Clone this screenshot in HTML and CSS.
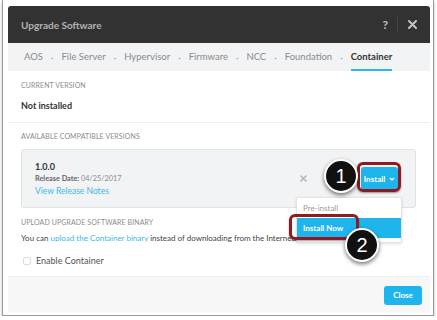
FILE: index.html
```html
<!DOCTYPE html>
<html lang="en">
  <head>
    <meta charset="UTF-8" />
    <title>Upgrade Software</title>
    <link rel="stylesheet" href="styles.css">
  </head>
  <body>
    <div class="frame">
      <div class="dialog">
        <div class="dialog-header">
          <span class="dialog-title">Upgrade Software</span>
          <div class="header-actions">
            <span class="help">?</span>
            <span class="header-divider"></span>
            <svg class="close-x" width="9" height="9" viewBox="0 0 9 9">
              <path d="M1 1 L8 8 M8 1 L1 8" stroke="#c4c4c4" stroke-width="2" stroke-linecap="round" />
            </svg>
          </div>
        </div>

        <div class="tabs">
          <span class="tab">AOS</span>
          <span class="dot">·</span>
          <span class="tab">File Server</span>
          <span class="dot">·</span>
          <span class="tab">Hypervisor</span>
          <span class="dot">·</span>
          <span class="tab">Firmware</span>
          <span class="dot">·</span>
          <span class="tab">NCC</span>
          <span class="dot">·</span>
          <span class="tab">Foundation</span>
          <span class="dot">·</span>
          <span class="tab active">Container</span>
        </div>

        <div class="section current">
          <div class="section-label">Current Version</div>
          <div class="current-value">Not installed</div>
        </div>

        <div class="section available">
          <div class="section-label">Available Compatible Versions</div>
          <div class="version-card">
            <div class="version-info">
              <div class="version-number">1.0.0</div>
              <div class="release-date"><strong>Release Date:</strong> 04/25/2017</div>
              <a class="release-notes">View Release Notes</a>
            </div>
            <div class="version-actions">
              <svg class="remove-x" width="7" height="7" viewBox="0 0 7 7">
                <path d="M1 1 L6 6 M6 1 L1 6" stroke="#b5b5b5" stroke-width="1.6" stroke-linecap="round" />
              </svg>
              <div class="install-wrap">
                <button class="install-btn">Install
                  <svg width="6" height="4" viewBox="0 0 6 4">
                    <path d="M1 1 L3 3 L5 1" stroke="#fff" stroke-width="1.2" fill="none" />
                  </svg>
                </button>
                <div class="install-menu">
                  <div class="menu-item">Pre-install</div>
                  <div class="menu-item selected">Install Now</div>
                </div>
              </div>
            </div>
          </div>

          <div class="section-label upload-label">Upload Upgrade Software Binary</div>
          <p class="upload-text">You can <a>upload the Container binary</a> instead of downloading from the Internet.</p>

          <label class="checkbox-row">
            <span class="checkbox"></span>
            Enable Container
          </label>
        </div>

        <div class="dialog-footer">
          <button class="close-btn">Close</button>
        </div>

        <!-- annotations -->
        <span class="highlight hl-install"></span>
        <span class="highlight hl-now"></span>
        <span class="callout callout-1">1</span>
        <span class="callout callout-2">2</span>
      </div>
    </div>
  </body>
</html>
```

FILE: styles.css
```css
* {
  margin: 0;
  padding: 0;
  box-sizing: border-box;
}
body {
  background: #ffffff;
  font-family: Lato, "Open Sans", sans-serif;
  color: #333;
}
.frame {
  width: 432px;
  margin-left: 2px;
  padding: 6px 3px 2px 5px;
  border: 1px solid #9a9a9a;
  border-top: none;
  box-shadow: 0 2px 3px rgba(0, 0, 0, 0.25);
}
.dialog {
  position: relative;
  width: 422px;
  height: 307px;
  display: flex;
  flex-direction: column;
  background: #fff;
  border-radius: 3px 3px 0 0;
}
.dialog-header {
  height: 37px;
  background: #323232;
  border-radius: 3px 3px 0 0;
  display: flex;
  align-items: center;
  justify-content: space-between;
  padding: 0 13px 0 13px;
}
.dialog-title {
  font-size: 10px;
  font-weight: bold;
  color: #b3b3b3;
}
.header-actions {
  display: flex;
  align-items: center;
}
.help {
  font-size: 12px;
  font-weight: 900;
  color: #b8b8b8;
}
.header-divider {
  width: 1px;
  height: 16px;
  background: #454545;
  margin: 0 10px 0 9px;
}
.tabs {
  height: 28px;
  background: #f2f3f5;
  display: flex;
  align-items: stretch;
  padding-left: 16px;
  font-size: 9.5px;
  color: #8a8a8a;
}
.tab {
  display: flex;
  align-items: center;
  padding-top: 1px;
  border-bottom: 2px solid transparent;
}
.tab.active {
  color: #333;
  font-weight: bold;
  border-bottom-color: #2db8ea;
}
.dot {
  display: flex;
  align-items: center;
  padding: 1px 8px 0;
  color: #999;
}
.section {
  padding: 0 13px;
}
.section.current {
  padding-top: 8px;
  padding-bottom: 9px;
  border-bottom: 1px solid #eeeeee;
}
.section-label {
  font-size: 7px;
  line-height: 12px;
  text-transform: uppercase;
  color: #8c8c8c;
  letter-spacing: 0.1px;
}
.current-value {
  margin-top: 8px;
  font-size: 9px;
  line-height: 14px;
  font-weight: bold;
  color: #333;
}
.section.available {
  padding-top: 7px;
}
.version-card {
  margin-top: 7px;
  margin-right: 1px;
  height: 59px;
  background: #f2f3f5;
  border: 1px solid #e1e2e4;
  border-radius: 3px;
  display: flex;
  align-items: center;
  justify-content: space-between;
  padding: 0 17px 0 13px;
}
.version-number {
  font-size: 9px;
  line-height: 12px;
  font-weight: bold;
  color: #333;
}
.release-date {
  font-size: 7.3px;
  line-height: 12px;
  color: #8c8c8c;
}
.release-date strong {
  color: #666;
}
.release-notes {
  display: block;
  font-size: 8.5px;
  line-height: 12px;
  color: #3bb8e9;
}
.version-actions {
  display: flex;
  align-items: center;
  gap: 54px;
}
.install-wrap {
  position: relative;
}
.install-btn {
  width: 37px;
  height: 23px;
  border: none;
  border-radius: 3px;
  background: #1db5ec;
  color: #fff;
  font-family: inherit;
  font-size: 8px;
  font-weight: bold;
  display: flex;
  align-items: center;
  justify-content: center;
  gap: 4px;
}
.install-menu {
  position: absolute;
  top: 30px;
  right: -4px;
  width: 106px;
  padding-bottom: 4px;
  background: #fff;
  border: 1px solid #e3e3e3;
  border-radius: 2px;
  box-shadow: 0 1px 3px rgba(0, 0, 0, 0.12);
}
.menu-item {
  height: 20px;
  line-height: 20px;
  padding-left: 6px;
  font-size: 8px;
  color: #9a9a9a;
}
.menu-item.selected {
  background: #1db5ec;
  color: #fff;
  font-weight: bold;
}
.upload-label {
  margin-top: 8px;
}
.upload-text {
  margin-top: 4px;
  font-size: 8px;
  line-height: 12px;
  color: #444;
  white-space: nowrap;
}
.upload-text a {
  color: #3bb8e9;
}
.checkbox-row {
  margin-top: 10px;
  margin-left: 2px;
  display: flex;
  align-items: center;
  gap: 5px;
  font-size: 9px;
  line-height: 14px;
  color: #555;
}
.checkbox {
  width: 8px;
  height: 8px;
  border: 1px solid #dcdcdc;
  border-radius: 2px;
  background: #fff;
}
.dialog-footer {
  margin-top: auto;
  height: 37px;
  background: #f7f7f7;
  border-top: 1px solid #efefef;
  display: flex;
  align-items: center;
  justify-content: flex-end;
  padding-right: 8px;
}
.close-btn {
  width: 38px;
  height: 19px;
  border: none;
  border-radius: 3px;
  background: #1db5ec;
  color: #fff;
  font-family: inherit;
  font-size: 8px;
  font-weight: bold;
}
.highlight {
  position: absolute;
  border: 3px solid #8e1b1f;
  border-radius: 6px;
  box-shadow: 0 1px 2px rgba(0, 0, 0, 0.4);
}
.hl-install {
  left: 349px;
  top: 156px;
  width: 44px;
  height: 30px;
}
.hl-now {
  left: 281px;
  top: 208px;
  width: 70px;
  height: 26px;
}
.callout {
  position: absolute;
  width: 34px;
  height: 34px;
  border-radius: 50%;
  background: #111;
  border: 2px solid #fff;
  box-shadow: 0 2px 4px rgba(0, 0, 0, 0.55);
  color: #fff;
  font-family: "Liberation Sans", Arial, sans-serif;
  font-size: 20px;
  display: flex;
  align-items: center;
  justify-content: center;
}
.callout-1 {
  left: 316px;
  top: 153px;
}
.callout-2 {
  left: 337px;
  top: 222px;
}
```
